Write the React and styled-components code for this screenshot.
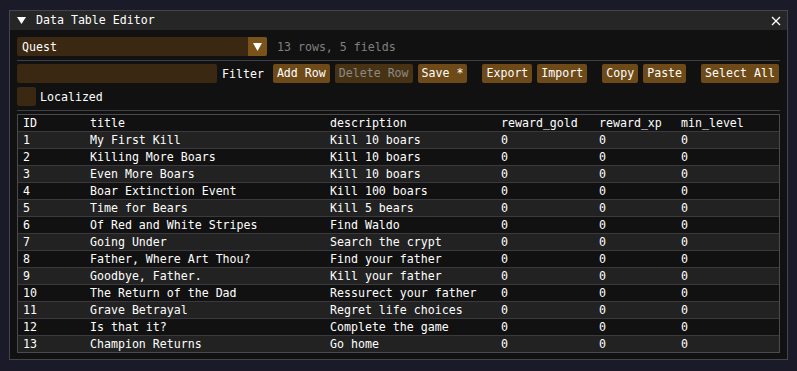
import React from "react";
import styled, { createGlobalStyle } from "styled-components";

const Global = createGlobalStyle`
  html, body { margin: 0; padding: 0; background: #1a1a29; }
  body { font-family: "DejaVu Sans Mono", "Liberation Mono", monospace; font-size: 11.6px; color: #fff; }
  * { box-sizing: border-box; }
`;

const Page = styled.div`
  padding: 10px 9px;
  width: 797px;
  height: 371px;
`;

const Window = styled.div`
  width: 779px;
  height: 350px;
  border: 1px solid #44444e;
  background: #111111;
  display: flex;
  flex-direction: column;
`;

const TitleBar = styled.div`
  height: 19px;
  background: #262626;
  display: flex;
  align-items: center;
  padding: 0 6px 0 7px;
  line-height: 19px;
`;

const TitleText = styled.span`
  margin-left: 10px;
  flex: 1;
`;

const Body = styled.div`
  padding: 7px 7px 0 7px;
  display: flex;
  flex-direction: column;
`;

const Row = styled.div`
  display: flex;
  align-items: center;
  height: 19px;
  margin-bottom: ${(p) => p.$mb ?? 4}px;
  & > * { flex-shrink: 0; }
`;

const Separator = styled.div`
  height: 1px;
  background: #3f3f46;
  margin-bottom: 3px;
`;

const Combo = styled.div`
  width: 250px;
  height: 19px;
  background: #3a2812;
  border-radius: 2px;
  display: flex;
  align-items: center;
  padding-left: 5px;
  overflow: hidden;
`;

const ComboLabel = styled.span`
  flex: 1;
`;

const ComboArrow = styled.div`
  width: 19px;
  height: 19px;
  background: #7a531b;
  display: flex;
  align-items: center;
  justify-content: center;
`;

const Muted = styled.span`
  color: #808080;
  margin-left: ${(p) => p.$ml ?? 0}px;
`;

const Input = styled.div`
  width: 200px;
  height: 19px;
  background: #3a2812;
  border-radius: 2px;
`;

const Label = styled.span`
  margin-left: ${(p) => p.$ml ?? 5}px;
  margin-right: ${(p) => p.$mr ?? 0}px;
`;

const Button = styled.div`
  height: 19px;
  padding: 0 4px;
  line-height: 19px;
  border-radius: 2px;
  background: ${(p) => (p.$disabled ? "#483214" : "#6e4a18")};
  color: ${(p) => (p.$disabled ? "#8a8a8a" : "#ffffff")};
  margin-left: ${(p) => p.$ml ?? 5}px;
  white-space: pre;
`;

const Checkbox = styled.div`
  width: 19px;
  height: 19px;
  background: #3a2812;
  border-radius: 2px;
`;

const Table = styled.div`
  border: 1px solid #4a4a4f;
  display: flex;
  flex-direction: column;
  width: 763px;
`;

const TRow = styled.div`
  display: grid;
  grid-template-columns: 67px 240px 171px 98px 82px 1fr;
  line-height: 16px;
  border-top: ${(p) => (p.$first ? "none" : "1px solid #3a3a3e")};
  background: ${(p) => (p.$odd ? "#222222" : "#111111")};
  height: ${(p) => (p.$first ? 16 : 17)}px;
`;

const Cell = styled.div`
  padding-left: 5px;
  white-space: pre;
  overflow: hidden;
`;

const TriangleDown = ({ size = 9, h = 7 }) => (
  <svg width={size} height={h} viewBox={`0 0 ${size} ${h}`}>
    <polygon points={`0,0 ${size},0 ${size / 2},${h}`} fill="#ffffff" />
  </svg>
);

const CloseIcon = () => (
  <svg width="10" height="10" viewBox="0 0 10 10">
    <path d="M1 1 L9 9 M9 1 L1 9" stroke="#ffffff" strokeWidth="1.3" />
  </svg>
);

const rows = [
  ["1", "My First Kill", "Kill 10 boars"],
  ["2", "Killing More Boars", "Kill 10 boars"],
  ["3", "Even More Boars", "Kill 10 boars"],
  ["4", "Boar Extinction Event", "Kill 100 boars"],
  ["5", "Time for Bears", "Kill 5 bears"],
  ["6", "Of Red and White Stripes", "Find Waldo"],
  ["7", "Going Under", "Search the crypt"],
  ["8", "Father, Where Art Thou?", "Find your father"],
  ["9", "Goodbye, Father.", "Kill your father"],
  ["10", "The Return of the Dad", "Ressurect your father"],
  ["11", "Grave Betrayal", "Regret life choices"],
  ["12", "Is that it?", "Complete the game"],
  ["13", "Champion Returns", "Go home"],
];

export default function App() {
  return (
    <>
      <Global />
      <Page>
        <Window>
          <TitleBar>
            <TriangleDown />
            <TitleText>Data Table Editor</TitleText>
            <CloseIcon />
          </TitleBar>
          <Body>
            <Row>
              <Combo>
                <ComboLabel>Quest</ComboLabel>
                <ComboArrow>
                  <TriangleDown size={9} h={8} />
                </ComboArrow>
              </Combo>
              <Muted $ml={10}>13 rows, 5 fields</Muted>
            </Row>
            <Separator />
            <Row>
              <Input />
              <Label $ml={5} $mr={4}>Filter</Label>
              <Button>Add Row</Button>
              <Button $disabled>Delete Row</Button>
              <Button>Save *</Button>
              <Button $ml={15}>Export</Button>
              <Button>Import</Button>
              <Button $ml={15}>Copy</Button>
              <Button>Paste</Button>
              <Button $ml={15}>Select All</Button>
            </Row>
            <Row>
              <Checkbox />
              <Label $ml={4}>Localized</Label>
            </Row>
            <Separator />
            <Table>
              <TRow $first>
                <Cell>ID</Cell>
                <Cell>title</Cell>
                <Cell>description</Cell>
                <Cell>reward_gold</Cell>
                <Cell>reward_xp</Cell>
                <Cell>min_level</Cell>
              </TRow>
              {rows.map((r, i) => (
                <TRow key={r[0]} $odd={i % 2 === 0}>
                  <Cell>{r[0]}</Cell>
                  <Cell>{r[1]}</Cell>
                  <Cell>{r[2]}</Cell>
                  <Cell>0</Cell>
                  <Cell>0</Cell>
                  <Cell>0</Cell>
                </TRow>
              ))}
            </Table>
          </Body>
        </Window>
      </Page>
    </>
  );
}
